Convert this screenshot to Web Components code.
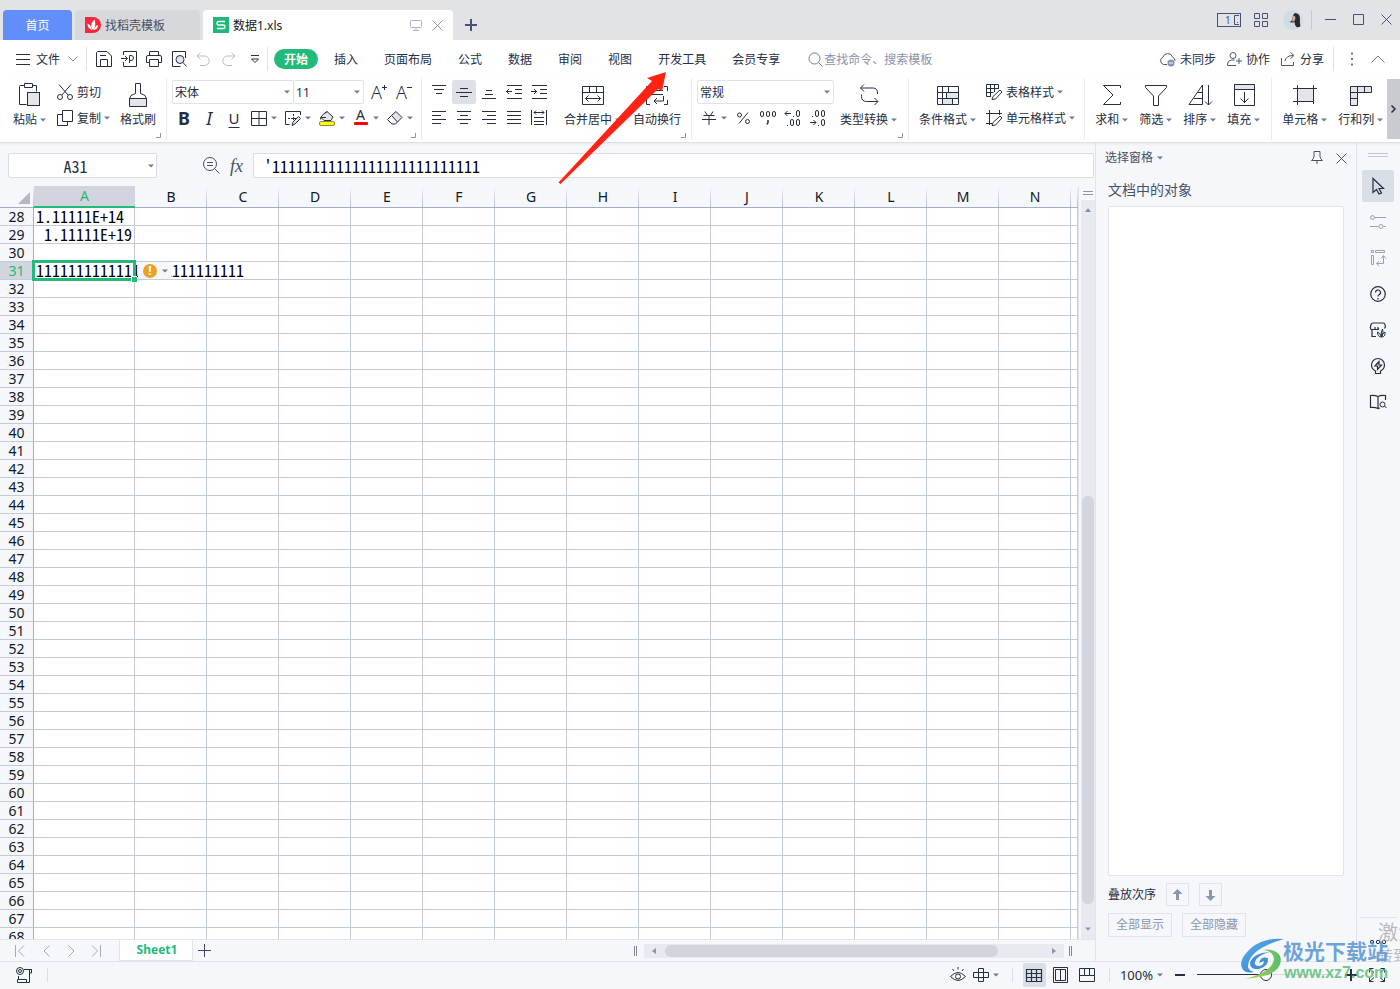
<!DOCTYPE html>
<html lang="zh-CN">
<head>
<meta charset="utf-8">
<title>数据1.xls</title>
<style>
html,body{margin:0;height:100%;overflow:hidden}
body{font:12px/16px "Noto Sans","Noto Sans CJK SC",sans-serif;color:#262e42;
--ink:#262e42;--mute:#6f7a98;--line:#e2e4e9;--pane:#f5f7fa;--green:#21ba7a;--grid:#c3cadb;--head:#a3adc6}
</style>
</head>
<body>
<office-app></office-app>
<script>
const F='#e3e5e9';
const ICONS={
caret:[6,4,'<path d="M0 .5h6L3 3.5z" fill="currentColor" stroke="none"/>'],
left:[4,6,'<path d="M4 0v6L0 3z" fill="currentColor" stroke="none"/>'],
right:[4,6,'<path d="M0 0v6l4-3z" fill="currentColor" stroke="none"/>'],
up:[6,4,'<path d="M0 4h6L3 0z" fill="currentColor" stroke="none"/>'],
chevdown:[10,6,'<path d="M.5 .5L5 5l4.500-4.500"/>'],
chevup:[14,8,'<path d="M.5 7.500L7 1l6.500 6.500"/>'],
next:[5,8,'<path d="M.5 .5L4 4 .5 7.500" stroke-width="1.500"/>'],
menu:[14,12,'<path d="M0 1.500h14M0 6.500h14M0 11.500h14"/>'],
docer:[16,16,'<path d="M0 0h8a8 8 0 0 1 0 16H0z" fill="#f8283c" stroke="none"/><path d="M8 13C5 9 6 6 9.500 2.500 11 6 10.500 10 8 13zM7 13C4 12 2.500 10 2.500 6.500 5 7.500 6 9 7 13zM8.500 13c1-2.500 2-4 4.500-5 0 3-1.500 4.500-4.500 5z" fill="#fff" stroke="none"/>'],
sheet:[16,16,'<path d="M0 0h16v16H0z" fill="#1fb877" stroke="none"/><path d="M12 4.500H5.500Q4 4.500 4 6.300t1.500 1.700h5q1.500 0 1.500 1.700t-1.500 1.800H4" stroke="#fff" stroke-width="1.300"/>'],
screen:[12,12,'<rect x=".5" y="1.500" width="11" height="7" rx="1"/><path d="M6 8.500v3M3 11.500h6"/>'],
close:[11,11,'<path d="M.5 .5l10 10M10.500 .5l-10 10"/>'],
plus:[12,12,'<path d="M6 0v12M0 6h12" stroke-width="2"/>'],
plusthin:[13,13,'<path d="M6.500 0v13M0 6.500h13"/>'],
window:[24,14,'<rect x=".5" y=".5" width="23" height="13"/><path d="M22 2.500h-4.500v9H22M20 9.500h1"/><text x="8" y="11" font-size="10" fill="currentColor" stroke="none">1</text>'],
apps:[14,14,'<path d="M.5 .5h5v5h-5zM8.500 .5h5v5h-5zM.5 8.500h5v5h-5zM8.500 8.500h5v5h-5z"/>'],
avatar:[20,20,'<circle cx="10" cy="10" r="10" fill="#cfdde3" stroke="none"/><path d="M12 3q5 0 5 6-.5 4 .5 7-2 2-4 1-2-2-2-5-2 1-5 0 3-1 3-4 .5-4 2.500-5z" fill="#2b2730" stroke="none"/><path d="M10.500 5.500q2 0 2 2.500l-1 3-2 1q-1-3 1-6.500z" fill="#d9a99a" stroke="none"/>'],
min:[11,11,'<path d="M0 5.500h11"/>'],
max:[11,11,'<path d="M.5 .5h10v10H.5z"/>'],
save:[16,16,'<path d="M.5 1.500v14h15V5L11 .5H1.500zM4.500 15.500v-7h7v7M4 4.500h6"/>'],
pdf:[16,16,'<path d="M2.500 4V.5h13v15h-13V11M0 7.500h6M4 5l2.500 2.500L4 10M8.500 12V4.500h1.500a2.500 2.500 0 0 1 0 5h-2"/>'],
print:[16,16,'<path d="M3.500 5V.5h9V5M3 11.500H.5V6q0-1.500 1.500-1.500h12q1.500 0 1.500 1.500v5.500H13M3.500 8.500h9v7h-9z"/>'],
preview:[16,16,'<path d="M14.500 7V.5h-13v15h8"/><circle cx="9" cy="8.500" r="4" fill="'+F+'"/><path d="M12 11.500l3.500 4"/>'],
undo:[14,14,'<path d="M4.500 .5L1 4l3.500 3.500M1 4h7.500a4.500 4.500 0 0 1 0 9.500H4"/>'],
redo:[14,14,'<path d="M9.500 .5L13 4 9.500 7.500M13 4H5.500a4.500 4.500 0 0 0 0 9.500H10"/>'],
more:[8,8,'<path d="M0 .5h8M.5 4h7L4 7.500z"/>'],
search:[15,15,'<circle cx="6.500" cy="6.500" r="5.500"/><path d="M10.500 10.500l4 4"/>'],
cloud:[17,16,'<path d="M8 13.500H4.500A4 4 0 0 1 4 6a5 5 0 0 1 9.500 0q2.500 1 2.500 4"/><circle cx="12" cy="12" r="3.500" fill="#8592b0" stroke="none"/><path d="M10 12h4" stroke="#fff"/>'],
team:[15,14,'<circle cx="6" cy="3.500" r="3"/><path d="M9 13.500H.5V12q0-3.500 4-4h3M12 6v6M9 9h6"/>'],
share:[15,14,'<path d="M.5 6v7.500h12V10M4 9q1-5.500 8-5.500M9.500 .5l3.500 3-3.500 3"/>'],
dots:[3,14,'<path d="M0 1.500h2M0 7h2M0 12.500h2" stroke-width="2"/>'],
paste:[24,24,'<path d="M7 2.500H2.500q-1 0-1 1v18h7M14 2.500h4.500v6M6.500 .5h8v4h-8z"/><rect x="9.500" y="9.500" width="12" height="13" fill="'+F+'"/>'],
cut:[16,16,'<path d="M2 .5L11 11M14 .5L5 11"/><circle cx="3" cy="13" r="2.500"/><circle cx="13" cy="13" r="2.500"/>'],
copy:[16,16,'<path d="M5.500 .5h10v11h-10zM5 4.500H.5v11h10V12"/>'],
brush:[24,24,'<path d="M3.500 15.500h17v8h-17z" fill="'+F+'"/><path d="M3.500 15.500q0-3.500 6-5V.5h5v10q6 1.500 6 5"/>'],
border:[16,16,'<path d="M.5 1.500h15v14H.5zM8 1v15M0 8.500h16"/>'],
draw:[16,16,'<path d="M15.500 5V1.500H.5v13h4M3 8.500h2M6 8.500h5M8.500 4v2M8.500 7v3M15.500 4"/><path d="M7 15.500l1-3.500 5.500-5.500 2 2L10 14z" fill="'+F+'"/>'],
fill:[16,16,'<path d="M1.500 9.500Q1 6 8 1.500l6 5.500-2 3.500H5L2 7.500h5M8 1.500L6 3.500" fill="'+F+'"/><rect x=".5" y="11.500" width="15" height="4" rx="1.500" fill="#ff0" stroke="#8d8c35"/>'],
color:[16,16,'<text x="3" y="10" font-size="14" fill="currentColor" stroke="none">A</text><rect x="1" y="12" width="14" height="3" rx="1" fill="#f00" stroke="none"/>'],
eraser:[16,16,'<path d="M4.500 5.500L9 1.500 15 7.500 10.500 12z" fill="'+F+'"/><path d="M4.500 5.500L.5 9.500l4.500 4.500h3.500l2-2"/>'],
Aplus:[18,18,'<text x="1" y="16" font-size="18" font-weight="300" fill="currentColor" stroke="none">A</text><path d="M12 4.500h5M14.500 2v5"/>'],
Aminus:[18,18,'<text x="1" y="16" font-size="18" font-weight="300" fill="currentColor" stroke="none">A</text><path d="M12 4.500h5"/>'],
vtop:[16,16,'<path d="M1 1.500h14M3 5.500h10M5 9.500h6"/>'],
vmid:[16,16,'<path d="M4 4.500h8M0 8.500h16M4 12.500h8"/>'],
vbot:[16,16,'<path d="M5 6.500h6M4 10.500h8M1 14.500h14"/>'],
outdent:[16,16,'<path d="M1 1.500h15M9 5.500h7M9 9.500h7M1 14.500h15M0 7.500h6M3 5L.5 7.500 3 10"/>'],
indent:[16,16,'<path d="M1 1.500h15M9 5.500h7M9 9.500h7M1 14.500h15M0 7.500h6M3 5l2.500 2.500L3 10"/>'],
aleft:[14,14,'<path d="M0 .5h14M0 4.500h9M0 8.500h14M0 12.500h9"/>'],
acenter:[14,14,'<path d="M0 .5h14M3 4.500h8M0 8.500h14M3 12.500h8"/>'],
aright:[14,14,'<path d="M0 .5h14M5 4.500h9M0 8.500h14M5 12.500h9"/>'],
ajust:[14,14,'<path d="M0 .5h14M0 4.500h14M0 8.500h14M0 12.500h14"/>'],
adist:[16,16,'<path d="M.5 0v15M15.500 0v15M3 2.500h10M5 .5L3 2.500l2 2M11 .5l2 2-2 2M3 7.500h10M3 11.500h10M3 14.500h10"/>'],
merge:[24,24,'<path d="M1.500 3.500h21v18h-21zM1.500 9.500h21M8.500 3.500v6M15.500 3.500v6M4.500 15.500h15M7.500 12.500l-3 3 3 3M16.500 12.500l3 3-3 3"/>'],
wrap:[24,24,'<path d="M5 3.500H1.500V8M19 3.500h3.500V8M5 21.500H1.500V17M19 21.500h3.500V17M6 7.500h12M6 11.500h12M18.500 13v5H9M12 15l-3 3 3 3"/>'],
yen:[16,16,'<path d="M4 1.500l2.500 4M12 1.500l-2.500 4M2.500 5.500h11M1 9.500h14M8 5.500V15"/>'],
percent:[16,16,'<path d="M13 2.500L4 13.500"/><circle cx="4.500" cy="5" r="2"/><circle cx="12.500" cy="11.500" r="2"/>'],
thousand:[18,16,'<rect x="1.500" y="1.500" width="3" height="5" rx="1.500"/><rect x="7.500" y="1.500" width="3" height="5" rx="1.500"/><rect x="13.500" y="1.500" width="3" height="5" rx="1.500"/><path d="M9 10v2.500l-1 2" stroke-width="1.500"/>'],
decadd:[18,18,'<path d="M1 4.500h6M3.500 2L1 4.500 3.500 7M9 7.500h1M3 16.500h1"/><rect x="12.500" y="1.500" width="3" height="6" rx="1.500"/><rect x="6.500" y="10.500" width="3" height="6" rx="1.500"/><rect x="12.500" y="10.500" width="3" height="6" rx="1.500"/>'],
decsub:[18,18,'<path d="M1 13.500h6M4.500 11L7 13.500 4.500 16M9 16.500h1M3 7.500h1"/><rect x="6.500" y="1.500" width="3" height="6" rx="1.500"/><rect x="12.500" y="1.500" width="3" height="6" rx="1.500"/><rect x="12.500" y="10.500" width="3" height="6" rx="1.500"/>'],
convert:[24,24,'<path d="M7 1.500L3.500 5 7 8.500M3.500 5H16q4.500 0 4.500 5v1M4.500 11.500v2q0 5 5 5h11M17.500 15l3.500 3.500-3.500 3.500"/>'],
cond:[24,24,'<path d="M1.500 3.500h21v18h-21zM1.500 9.500h21M1.500 15.500h21M6.500 3.500v18M12.500 3.500v6M10.500 9.500v6M16.500 9.500v12"/><path d="M6.500 15.500h10v6h-10zM10.500 9.500h12v6h-12z" fill="'+F+'"/>'],
tstyle:[16,16,'<path d="M5 12.500H.5V.5h12V5M.5 4.500h12M.5 8.500h7M4.500 .5v12M8.500 .5V8" fill="none"/><path d="M6 15.500l1-3 7-6.500 2 2-6.500 7z" fill="#fff"/>'],
cstyle:[16,16,'<path d="M3.500 0v15M0 3.500h16M0 13.500h6M13.500 0v5"/><path d="M6 15.500l1-3 7-6.500 2 2-6.500 7z" fill="#fff"/>'],
sum:[24,24,'<path d="M20.500 5V2.500h-17L13 12 3.500 21.500h17V19"/>'],
filter:[24,24,'<path d="M1.500 2.500h21v2l-8 8.500v9.500h-5V13l-8-8.500z"/>'],
sort:[24,24,'<path d="M14.500 21.500V2L1 21.500zM9.500 9.500h5M6 15.500h8.500M20.500 2v20M17 18.500l3.500 3.500 3.500-3.500"/>'],
fillin:[24,24,'<path d="M2.500 1.500h20v21h-20z"/><path d="M2.500 1.500h20v5h-20z" fill="'+F+'"/><path d="M12.500 9v11M8.500 15.500l4 4 4-4"/>'],
cell:[24,24,'<path d="M4.500 5.500h16v13h-16z" fill="'+F+'"/><path d="M4.500 2v20M20.500 2v14M0 5.500h24M0 18.500h16M20.500 19v2" /><path d="M4.500 18.500h13"/>'],
rowcol:[24,24,'<path d="M1.500 3.500h21v6h-14v13h-7z" fill="'+F+'"/><path d="M8.500 3.500v6M15.500 3.500v6M1.500 9.500h7M1.500 15.500h7"/>'],
corner:[5,5,'<path d="M4.500 0v4.500H0"/>'],
zoomout:[17,17,'<circle cx="7" cy="7" r="6.500"/><path d="M4 5.500h6M4 8.500h6M11.500 11.500l5 5"/>'],
pin:[14,14,'<path d="M4 .5h6v5q0 2 2.500 4H1.500Q4 7.500 4 5.500zM7 9.500V13"/>'],
handle:[20,5,'<path d="M0 .5h20M0 3.500h20"/>'],
grip:[10,4,'<path d="M0 .5h10M0 3.500h10"/>'],
cursor:[16,18,'<path d="M3 1.500v14l3.500-3 2.500 4.500 2.500-1-2.500-4.500H13.500z" stroke-width="1.200"/>'],
sliders:[16,16,'<path d="M5 3.500h11M0 12.500h8.500M13.500 12.500H16"/><circle cx="2.500" cy="3.500" r="2"/><circle cx="11" cy="12.500" r="2"/>'],
arrange:[16,16,'<path d="M1.500 .5h2v2h-2zM5.500 .5h9v2h-9zM1.500 5.500h2v9h-2zM13.500 6v7.500H7M11 8.500l2.500-3 2.500 3M9 11l-2.500 2.500L9 16"/>'],
help:[16,16,'<circle cx="8" cy="8" r="7.300" stroke-width="1.200"/><path d="M5.500 6.500a2.500 2.500 0 1 1 3.500 2.300q-1 .5-1 1.700M8 12v1.500" stroke-width="1.200"/>'],
skin:[16,16,'<path d="M6 14.500H2V8Q-.5 7 1 2.500 1.500 1 3 1h10q1.500 0 2 1.500Q16 5 14.500 6.500M2 7.500h3V5M5 7.500h3V5M8 7.500l1-1" stroke-width="1.200"/><path d="M11.500 15q-4 0-4-5 2.500 1 4 5-1-4 1-8 1.500 3-1 8 1-4 3.500-5 .5 5-3.500 5z"/>'],
bulb:[16,16,'<path d="M5.500 13Q1.500 11 1.500 7a6.500 6.500 0 1 1 13 0q0 4-4 6v2.500h-5zM9 3.500L5 8h2.500v3.500L11.500 7H9z" stroke-width="1.200"/>'],
book:[17,16,'<path d="M8 2.500Q5 1 .5 1.500v12q4.500-.5 7.500 1zM8 2.500Q11 1 15.500 1.500V6M8 14.500l2-.5" stroke-width="1.200"/><circle cx="12.500" cy="10.500" r="2.500"/><path d="M14.500 12l2 2"/>'],
arrup:[11,12,'<path d="M5.500 0L10.500 5H7v6H4V5H.5z" fill="currentColor" stroke="none"/>'],
arrdown:[11,12,'<path d="M5.500 12L10.500 7H7V1H4v6H.5z" fill="currentColor" stroke="none"/>'],
first:[10,12,'<path d="M.5 0v12M9 .5L3.500 6 9 11.500"/>'],
prev:[7,12,'<path d="M6.500 .5L1 6l5.500 5.500"/>'],
nextp:[7,12,'<path d="M.5 .5L6 6 .5 11.500"/>'],
last:[10,12,'<path d="M9.500 0v12M1 .5L6.500 6 1 11.500"/>'],
split:[3,10,'<path d="M.5 0v10M2.500 0v10"/>'],
script:[17,16,'<circle cx="4" cy="4" r="3.500"/><circle cx="4" cy="4" r="1.500"/><path d="M8 2.500h8M13.500 2.500v13M1.500 12.500h9v3h-9zM2.500 12V9M15.500 2v4h-2M10.500 15.500h3"/>'],
eye:[16,16,'<path d="M.5 9.500Q8 1.500 15.500 9.500 8 17.500.500 9.500zM8 0v2.500M2.500 2l1.500 2M13.500 2L12 4"/><circle cx="8" cy="9.500" r="2.500"/>'],
cross:[16,14,'<path d="M5.500 .5h5v13h-5zM.5 4.500h15v5H.5z"/>'],
table:[16,14,'<path d="M.5 1.500h15v12H.5zM0 5.500h16M0 9.500h16M5.500 1.500v12M10.500 1.500v12" stroke-width="1.200"/>'],
page:[15,16,'<path d="M.5 .5h14v15H.5zM2.500 2.500h10v11h-10zM7.500 3v10"/>'],
breaks:[16,14,'<path d="M.5 .5h15v13H.5zM5.500 .5v7h5v-7M.5 7.500h5M10.500 7.500h5"/>'],
minus:[10,10,'<path d="M0 5h10" stroke-width="2"/>'],
full:[16,14,'<path d="M.5 4.500v-4h4M11.500 .5h4v4M15.500 9.500v4h-4M4.500 13.500h-4v-4M.5 .5l4.500 4M15.500 .5l-4.500 4M15.500 13.500l-4.500-4M.5 13.500l4.500-4"/>'],
dots3:[18,6,'<circle cx="3" cy="3" r="1.700"/><circle cx="9" cy="3" r="1.700"/><circle cx="15" cy="3" r="1.700"/>']
};
class Base extends HTMLElement{
  connectedCallback(){
    if(this.shadowRoot)return;
    this.attachShadow({mode:'open'}).innerHTML=`<style>*{box-sizing:border-box}button,a,input,select{font:inherit;color:inherit;margin:0;padding:0;border:0;background:none;outline:0;text-decoration:none;white-space:nowrap}${this.css()}</style>${this.html()}`;
  }
}
const def=(name,css,html)=>customElements.define(name,class extends Base{css(){return css}html(){return typeof html==='function'?html(this):html}});
const ic=(n,c='')=>`<ui-icon name="${n}" ${c&&`style="color:${c}"`}></ui-icon>`;
const caret=()=>ic('caret','var(--mute)');

def('ui-icon',':host{display:block;flex:none}svg{display:block;overflow:visible;font-family:"Noto Sans",sans-serif}',e=>{
  const [w,h,b]=ICONS[e.getAttribute('name')];
  return `<svg width="${w}" height="${h}" viewBox="0 0 ${w} ${h}" fill="none" stroke="currentColor" aria-hidden="true">${b}</svg>`});

/* Icon-only button; "split" adds a drop-down caret */
def('icon-button',`:host{display:block;flex:none;width:25px;height:24px}:host([split]){width:34px}
button{display:flex;align-items:center;justify-content:center;gap:4px;width:24px;height:100%;border-radius:2px}
:host([split]) button{width:34px}:host([active]) button{background:#dde1e7}
.t{font:20px/24px "Noto Sans",sans-serif}.b{font-weight:700;font-size:18px}.i{font-style:italic;font-size:18px}.u{font-size:15px;text-decoration:underline;text-underline-offset:3px}`,
e=>{const t=e.getAttribute('text');return `<button>${t?`<span class="t ${e.getAttribute('kind')}">${t}</span>`:ic(e.getAttribute('icon'))}${e.hasAttribute('split')?caret():''}</button>`});

/* Tall ribbon command: icon over its label */
def('big-tool',`:host{display:block;flex:none}button{display:flex;flex-direction:column;align-items:center;padding-top:3px;gap:5px}
span{display:flex;align-items:center;gap:3px}`,
e=>`<button>${ic(e.getAttribute('icon'))}<span><slot></slot>${e.hasAttribute('caret')?caret():''}</span></button>`);

/* Small ribbon command: icon beside its label */
def('small-tool',`:host{display:block;flex:none;height:24px}button{display:flex;align-items:center;height:24px}span{margin:0 3px 0 4px;padding-top:2px}`,
e=>`<button>${ic(e.getAttribute('icon'))}<span><slot></slot></span>${e.hasAttribute('caret')?caret():''}</button>`);

def('drop-list',`:host{display:flex;align-items:center;height:24px;position:relative;border:1px solid #dfe2e7;border-radius:2px;background:#fff}
select{appearance:none;flex:1;min-width:0;padding:2px 16px 0 2px;height:22px}ui-icon{position:absolute;right:3px;pointer-events:none}`,
e=>`<select aria-label="${e.getAttribute('label')}"><option>${e.getAttribute('value')}</option></select>${caret()}`);

def('ribbon-group',`:host{display:flex;flex:none;position:relative;gap:11px;padding-top:2px;height:62px;border-right:1px solid #e8eaee}
:host(:last-of-type){border:0}.c{position:absolute;right:5px;bottom:2px}`,
e=>`<slot></slot>${e.hasAttribute('launcher')?`<span class="c">${ic('corner','#8b95ae')}</span>`:''}`);
def('tool-rows',':host{display:flex;flex-direction:column;gap:2px;flex:none}','<slot></slot>');
def('tool-row',':host{display:flex;align-items:center;height:24px}','<slot></slot>');

def('title-bar',`:host{display:flex;height:40px;background:#e1e3e7;padding:0 8px 0 3px;gap:3px;color:#465272}
.tab{display:flex;align-items:center;gap:4px;height:30px;margin-top:10px;border-radius:4px 4px 0 0;padding:0 10px}
.tab span,.tab b{padding-top:2px}
.home{width:69px;background:#618efa;color:#fff;justify-content:center}.tpl{width:125px;background:#d7d8db;color:#4a4f5c}
.doc{width:250px;background:#fff;color:#111827}.doc b{font-weight:400;flex:1}.doc button{margin-left:6px}
.add{margin:10px 0 0 9px;height:30px}.right{margin-left:auto;display:flex;align-items:center;gap:17px;height:39px}
i{width:1px;height:20px;background:#c6c9d0;margin:0 -4px 0 -9px}.g{display:flex;align-items:center;gap:13px;margin-right:-2px}`,
`<a class="tab home" href="#"><span>首页</span></a><a class="tab tpl" href="#">${ic('docer')}<span>找稻壳模板</span></a>
<div class="tab doc">${ic('sheet')}<b>数据1.xls</b>${ic('screen','#a9b1c6')}<button aria-label="关闭标签">${ic('close','#8d97b0')}</button></div>
<button class="add" aria-label="新建">${ic('plus')}</button>
<div class="right"><div class="g">${ic('window')}${ic('apps')}</div><button aria-label="账户">${ic('avatar')}</button><i></i>
<button aria-label="最小化">${ic('min')}</button><button aria-label="最大化">${ic('max')}</button><button aria-label="关闭">${ic('close')}</button></div>`);

def('menu-bar',`:host{display:flex;align-items:center;height:38px;background:#fff;padding:0 15px 0 16px}
button{display:flex;align-items:center}button span{padding-top:2px}.file{gap:6px}.file ui-icon:last-child{margin-left:2px}
i{width:1px;height:24px;background:#e0e2e7}.quick{display:flex;align-items:center;gap:9px;margin:0 8px 0 9px}.redo{margin-left:3px}.more{margin-left:6px}
nav{display:flex;gap:6px;margin-left:6px}nav a{padding:1px 10px 0;height:20px;line-height:20px;border-radius:10px;white-space:nowrap}
nav a.on{background:var(--green);color:#fff;font-weight:700}
label{display:flex;align-items:center;gap:1px;margin-left:18px;color:var(--mute)}input{width:124px;height:20px}input::placeholder{color:#8a93ab;opacity:1}
.r{margin-left:auto;display:flex;align-items:center;gap:11px}.r button{gap:4px}.r i{margin:0 6px 0 -2px}.r .m{margin-right:6px}`,
`<button class="file">${ic('menu')}<span>文件</span>${ic('chevdown','#8b909c')}</button><i style="margin-left:8px"></i>
<div class="quick">${['save','pdf','print','preview'].map(n=>`<button aria-label="${n}">${ic(n)}</button>`).join('')}<button aria-label="撤销">${ic('undo','#b9bcc2')}</button><button class="redo" aria-label="恢复">${ic('redo','#b9bcc2')}</button><button class="more" aria-label="更多">${ic('more')}</button></div><i></i>
<nav><a class="on" href="#">开始</a>${['插入','页面布局','公式','数据','审阅','视图','开发工具','会员专享'].map(t=>`<a href="#">${t}</a>`).join('')}</nav>
<label>${ic('search')}<input aria-label="搜索" placeholder="查找命令、搜索模板"></label>
<div class="r"><button>${ic('cloud','#4c5670')}<span>未同步</span></button><button>${ic('team','#4c5670')}<span>协作</span></button><button>${ic('share','#4c5670')}<span>分享</span></button><i></i><button class="m" aria-label="选项">${ic('dots','#6f7684')}</button><button aria-label="收起">${ic('chevup','#6f7684')}</button></div>`);

const row=l=>l.map(n=>`<icon-button icon="${n}" ${n==='vmid'?'active':''}></icon-button>`).join('');
def('ribbon-bar',`:host{display:flex;height:65px;background:#fff;border-bottom:1px solid #dcdfe4;box-shadow:0 1px 3px #0000000f;position:relative;overflow:hidden}
.scroll{margin:1px 0 3px auto;width:13px;flex:none;background:#c9cbd1;display:grid;place-items:center}
.font{width:122px}.size{width:71px;margin-left:-1px}.num{width:137px}`,
`<ribbon-group launcher style="padding-left:13px;padding-right:10px;gap:10px"><big-tool icon="paste" caret>粘贴</big-tool>
<tool-rows style="margin-left:1px"><small-tool icon="cut">剪切</small-tool><small-tool icon="copy" caret>复制</small-tool></tool-rows><big-tool icon="brush">格式刷</big-tool></ribbon-group>
<ribbon-group launcher style="padding-left:5px;padding-right:4px"><tool-rows>
<tool-row><drop-list class="font" label="字体" value="宋体"></drop-list><drop-list class="size" label="字号" value="11"></drop-list><icon-button icon="Aplus" style="margin-left:3px"></icon-button><icon-button icon="Aminus"></icon-button></tool-row>
<tool-row><icon-button text="B" kind="b"></icon-button><icon-button text="I" kind="i"></icon-button><icon-button text="U" kind="u"></icon-button>${['border','draw','fill','color','eraser'].map(n=>`<icon-button icon="${n}" split></icon-button>`).join('')}</tool-row></tool-rows></ribbon-group>
<ribbon-group launcher style="padding-left:5px;padding-right:10px;gap:12px"><tool-rows><tool-row>${row(['vtop','vmid','vbot','outdent','indent'])}</tool-row><tool-row>${row(['aleft','acenter','aright','ajust','adist'])}</tool-row></tool-rows>
<big-tool icon="merge" caret>合并居中</big-tool><big-tool icon="wrap">自动换行</big-tool></ribbon-group>
<ribbon-group launcher style="padding-left:5px;padding-right:11px;gap:6px"><tool-rows><drop-list class="num" label="数字格式" value="常规"></drop-list><tool-row><icon-button icon="yen" split></icon-button>${row(['percent','thousand','decadd','decsub'])}</tool-row></tool-rows><big-tool icon="convert" caret>类型转换</big-tool></ribbon-group>
<ribbon-group style="padding:2px 9px 0 10px;gap:10px"><big-tool icon="cond" caret>条件格式</big-tool><tool-rows><small-tool icon="tstyle" caret>表格样式</small-tool><small-tool icon="cstyle" caret>单元格样式</small-tool></tool-rows></ribbon-group>
<ribbon-group style="padding-left:10px;padding-right:11px"><big-tool icon="sum" caret>求和</big-tool><big-tool icon="filter" caret>筛选</big-tool><big-tool icon="sort" caret>排序</big-tool><big-tool icon="fillin" caret>填充</big-tool></ribbon-group>
<ribbon-group style="padding-left:10px"><big-tool icon="cell" caret>单元格</big-tool><big-tool icon="rowcol" caret>行和列</big-tool></ribbon-group>
<button class="scroll" aria-label="更多命令">${ic('next')}</button>`);

const MONO='font:300 16px/18px "Noto Sans Mono CJK SC","Noto Sans CJK SC",monospace;font-feature-settings:"hwid";';
def('formula-bar',`:host{display:flex;align-items:center;height:43px;padding:2px 1px 0 8px}
.box{display:flex;align-items:center;position:relative;height:25px;background:#fff;border:1px solid #d9dce2;border-radius:2px}
.name{width:149px}.name input{width:100%;text-align:center;padding-right:14px;${MONO}color:#262e42}.name ui-icon{position:absolute;right:2px}
.tools{display:flex;align-items:center;gap:10px;margin:0 10px 0 46px;color:#465068}.fx{font:italic 18px/20px "Liberation Serif",serif}
.text{flex:1}.text input{width:100%;padding:0 10px;${MONO}color:#000}`,
`<div class="box name"><input aria-label="名称框" value="A31">${caret()}</div><div class="tools"><button aria-label="浏览公式结果">${ic('zoomout')}</button><button class="fx">fx</button></div><div class="box text"><input aria-label="编辑栏" value="'${'1'.repeat(26)}"></div>`);

const COLS='ABCDEFGHIJKLMN'.split('');
const cellText={28:'1.11111E+14',29:'1.11111E+19',31:'1'.repeat(26)};
def('sheet-grid',`:host{display:block;flex:1;min-width:0;overflow:hidden;background:#fff}
table{width:100%;table-layout:fixed;border-collapse:separate;border-spacing:0}
th,td{padding:0;height:18px;line-height:17px;border:0 solid var(--grid);border-width:0 1px 1px 0;font-weight:400;white-space:nowrap}
thead th{height:22px;line-height:21px;font-size:14px;border-right:0;border-bottom-color:var(--head);background:linear-gradient(#f5f7fa,#b4bdd2) right/1px 100% no-repeat var(--pane);color:#111827}
tbody th{font-size:14px;background:var(--pane);border-right-color:var(--head);color:#111827}
col.h{width:34px}col.a{width:101px}col.n{width:72px}
thead th.sel{background:#d2d5dd;color:var(--green);border-bottom:2px solid var(--green);line-height:20px}tbody th.sel{background:#d2d5dd;color:var(--green)}
.all{position:relative}.all:after{content:"";position:absolute;right:4px;bottom:3px;border:6px solid;border-color:transparent #b5b8bd #b5b8bd transparent}
td{${MONO}line-height:17px;color:#000}td.r{text-align:right;padding-right:2px}td.l{padding-left:2px}
.cur{position:relative}.cur .ring{position:absolute;inset:-2px;border:3px solid var(--green)}.cur .ring:after{content:"";position:absolute;right:-4px;bottom:-4px;width:5px;height:5px;background:var(--green);border:1px solid #fff;border-width:1px 0 0 1px}
.warn{position:absolute;left:104px;top:0;width:33px;height:17px;background:var(--pane);display:flex;align-items:center;gap:5px;padding-left:5px}
.warn b{width:14px;height:14px;border-radius:7px;background:#ee9f26;color:#fff;font:700 12px/14px "Noto Sans",sans-serif;text-align:center;font-feature-settings:normal}
.spill{border-right-color:transparent}`,
()=>{let r='';for(let i=28;i<=68;i++){r+=`<tr><th scope="row" ${i===31?'class="sel"':''}>${i}</th>`;
 for(let c=0;c<15;c++){const t=c===0&&cellText[i];
  if(i===31&&c===0)r+=`<td class="l cur">${t}<span class="ring"></span><span class="warn"><b>!</b>${caret()}</span></td>`;
  else r+=`<td class="${i===31&&c===1?'spill':i===28?'l':'r'}">${t||''}</td>`;}
 r+='</tr>';}
 return `<table><colgroup><col class="h"><col class="a">${'<col class="n">'.repeat(13)}<col></colgroup><thead><tr><th class="all"></th>${COLS.map((c,i)=>`<th scope="col" ${i?'':'class="sel"'}>${c}</th>`).join('')}<th></th></tr></thead><tbody>${r}</tbody></table>`});

def('scroll-y',`:host{display:flex;flex-direction:column;width:17px;flex:none;border-left:1px solid var(--line);padding-left:2px;background:var(--pane)}
.g{height:14px;display:grid;place-items:center;color:#8b95ae}.t{flex:1;min-height:0;background:#e8eaf0;display:flex;flex-direction:column;align-items:center;padding:8px 0;color:#8592b0}
.s1{flex:283}.s2{flex:23}.th{flex:407;width:12px;border-radius:6px;background:#d2d5dd}`,
`<div class="g">${ic('grip')}</div><div class="t">${ic('up')}<div class="s1"></div><div class="th"></div><div class="s2"></div>${ic('caret')}</div>`);

def('sheet-tabs',`:host{display:flex;align-items:center;height:22px;border-top:1px solid var(--line);padding:0 23px 0 15px;color:#a5abb6}
.n{display:flex;gap:18px;width:104px}.n button:nth-child(3){margin-right:-2px}.tab{height:21px;width:74px;background:#fff;border:1px solid var(--line);border-top:0;color:var(--green);font-weight:700;padding-left:2px}
.add{margin-left:5px;color:#3c4660}.s{margin-left:auto;color:#7f8798}.h{display:flex;align-items:center;width:420px;height:14px;margin:0 5px 0 7px;padding:0 8px 0 8px;background:#e8eaf0;color:#8592b0}
.th{flex:333;margin-left:9px;height:12px;border-radius:6px;background:#d2d5dd}.sp{flex:54}.e{color:#7f8798}`,
`<div class="n">${['first','prev','nextp','last'].map(n=>`<button aria-label="${n}">${ic(n)}</button>`).join('')}</div><button class="tab">Sheet1</button><button class="add" aria-label="新建工作表">${ic('plusthin')}</button>
<div class="s">${ic('split')}</div><div class="h">${ic('left')}<div class="th"></div><div class="sp"></div>${ic('right')}</div><div class="e">${ic('split')}</div>`);

def('selection-pane',`:host{display:flex;flex-direction:column;width:261px;flex:none;border-left:1px solid var(--line);padding:7px 12px 24px;color:#465068}
header{display:flex;align-items:center;height:16px;margin-left:-3px}header span{margin-right:auto;display:flex;align-items:center;gap:4px}
h2{font:400 14px/20px "Noto Sans","Noto Sans CJK SC",sans-serif;margin:14px 0 6px}.list{flex:1;background:#fff;border:1px solid var(--line);border-radius:2px}
.o{display:flex;align-items:center;gap:10px;margin-top:7px;height:23px;color:#262e42}.o button{width:23px;height:23px;border:1px solid var(--line);display:grid;place-items:center;color:#8b95ae}.w{display:flex;gap:10px;margin-top:7px}
.w button{width:64px;height:24px;border:1px solid var(--line);color:#8b95ae}`,
`<header><span>选择窗格${caret()}</span><button aria-label="固定">${ic('pin')}</button><button aria-label="关闭" style="margin:0 -3px 0 12px">${ic('close')}</button></header>
<h2>文档中的对象</h2><div class="list"></div><div class="o">叠放次序<button aria-label="上移">${ic('arrup')}</button><button aria-label="下移">${ic('arrdown')}</button></div>
<div class="w"><button>全部显示</button><button>全部隐藏</button></div>`);

def('side-rail',`:host{display:flex;flex-direction:column;align-items:center;gap:4px;width:44px;flex:none;border-left:1px solid var(--line);padding:10px 1px 0 0}
.h{height:13px;color:#c3c7cf}button{width:32px;height:32px;display:grid;place-items:center;border-radius:2px}.on{background:#dadfe7}.off{color:#9aa1b0}
.m{margin-top:auto;width:38px;height:44px;border-top:1px solid var(--line);border-radius:0;padding-top:4px}`,
`<div class="h">${ic('handle')}</div>${['cursor','sliders','arrange','help','skin','bulb','book'].map((n,i)=>`<button aria-label="${n}" class="${['on','off','off'][i]||''}">${ic(n)}</button>`).join('')}<button class="m" aria-label="更多">${ic('dots3')}</button>`);

def('status-bar',`:host{display:flex;align-items:center;height:28px;border-top:1px solid var(--line);background:var(--pane);padding:0 15px 2px 16px}
i{width:1px;height:14px;background:#dcdfe5}.r{display:flex;align-items:center;margin-left:auto}
button{display:flex;align-items:center;gap:6px}.on{width:23px;height:24px;background:#dadfe7;border-radius:2px;justify-content:center}
.z{font-size:13px;gap:4px}input{appearance:none;width:137px;height:12px;background:linear-gradient(90deg,var(--ink) 50%,#d5d8de 50%) center/100% 1px no-repeat}
input::-webkit-slider-thumb{appearance:none;width:12px;height:12px;border:1px solid var(--ink);border-radius:6px;background:#fff}`,
`<button aria-label="宏">${ic('script')}</button><i style="margin-left:14px"></i>
<div class="r"><button aria-label="护眼" style="margin-right:7px">${ic('eye')}</button><button aria-label="阅读" style="gap:4px">${ic('cross')}${caret()}</button><i style="margin:0 10px 0 13px"></i><button class="on" aria-label="普通">${ic('table')}</button><button aria-label="页面" style="margin:0 11px 0 7px">${ic('page')}</button><button aria-label="分页">${ic('breaks')}</button><i style="margin:0 10px 0 14px"></i>
<button class="z">100%${caret()}</button><button aria-label="缩小" style="margin:0 12px">${ic('minus')}</button><input type="range" aria-label="缩放" min="0" max="100" value="50"><button aria-label="放大" style="margin:0 12px 0 11px">${ic('plus')}</button><button aria-label="全屏">${ic('full')}</button></div>`);

/* Pointer drawn over the ribbon */
def('pointer-arrow',':host{position:absolute;left:558px;top:72px;pointer-events:none}svg{display:block}',
'<svg width="110" height="114" viewBox="0 0 110 114"><path d="M108 0L89 6l5 3L.5 110.500l2 1.500L100 17l4 2z" fill="#ff2313"/></svg>');

def('site-mark',`:host{position:absolute;right:0;bottom:0;width:160px;height:74px;overflow:hidden;pointer-events:none}
svg{position:absolute;left:0;top:22px}p{position:absolute;margin:0;white-space:nowrap}
.a{left:43px;top:23px;font:700 21px/24px "Noto Sans CJK SC",sans-serif;color:#5b97d3e0}.b{left:44px;top:48px;font:700 16px/20px "Liberation Sans",sans-serif;color:#63c07be0}
.c{left:138px;top:4px;font:20px/26px "Noto Sans CJK SC",sans-serif;color:#a3a5a8c0}.d{left:138px;top:30px;font:15px/20px "Noto Sans CJK SC",sans-serif;color:#a3a5a8c0}`,
`<p class="c">激活</p><p class="d">转到</p><svg width="44" height="46" viewBox="0 0 44 46"><defs><linearGradient id="g" x1="0" y1="0" x2="1" y2="1"><stop offset="0" stop-color="#58b3ee"/><stop offset="1" stop-color="#2f78c4"/></linearGradient><linearGradient id="h"><stop offset="0" stop-color="#c5d64a"/><stop offset="1" stop-color="#55bd6b"/></linearGradient></defs>
<path d="M44 2Q25 0 11 11-2 23 2 31q3 6 12 4-5-1-6-5Q8 12 44 2z" fill="url(#g)"/><path d="M22 13q13-2 18 6 4 12-12 19-12 3-24 4 18-4 25-11 8-8 3-14-3-4-10-4z" fill="url(#h)"/><path d="M30 15Q13 16 10 26q0 7 9 6 10-3 9-11-7-2-9 5 2-1 5-2 0 5-6 5-4-1-3-4 2-7 15-10z" fill="#438fd6"/></svg>
<p class="a">极光下载站</p><p class="b">www.xz7.com</p>`);

def('office-app',`:host{display:flex;flex-direction:column;height:100vh;position:relative;overflow:hidden;background:var(--pane)}
.w{display:flex;flex:1;min-height:0}main{flex:1;min-width:0;display:flex;flex-direction:column}.g{display:flex;flex:1;min-height:0}`,
`<title-bar></title-bar><menu-bar></menu-bar><ribbon-bar></ribbon-bar><div class="w"><main><formula-bar></formula-bar><div class="g"><sheet-grid></sheet-grid><scroll-y></scroll-y></div><sheet-tabs></sheet-tabs></main><selection-pane></selection-pane><side-rail></side-rail></div><status-bar></status-bar><pointer-arrow></pointer-arrow><site-mark></site-mark>`);
</script>
</body>
</html>
